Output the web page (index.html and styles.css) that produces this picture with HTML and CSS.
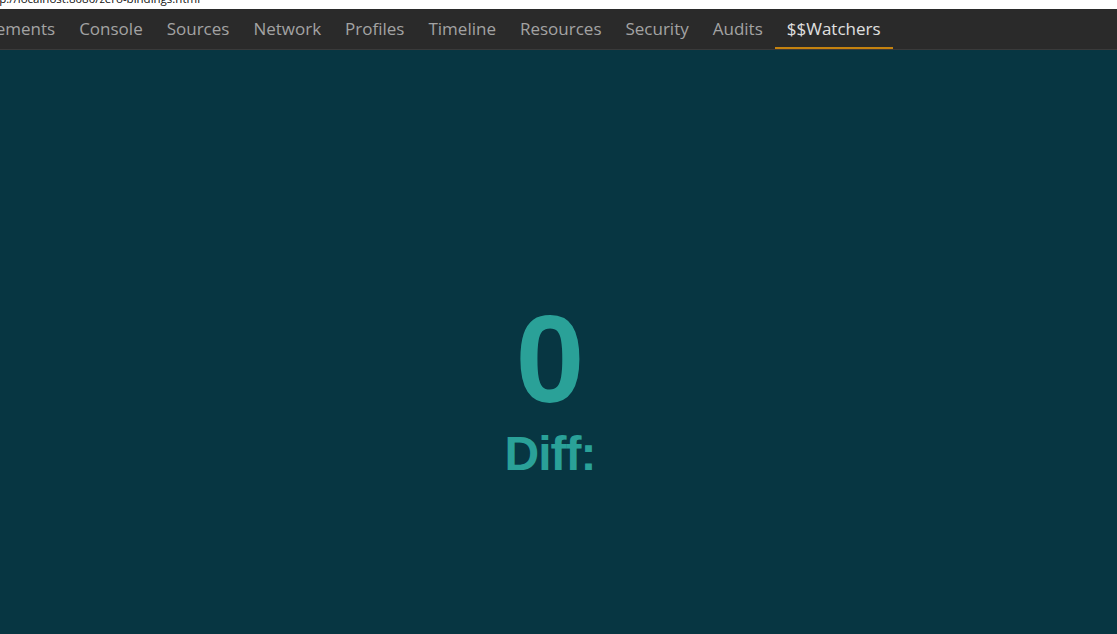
FILE: index.html
```html
<!DOCTYPE html>
<html>
<head>
<meta charset="utf-8">
<link rel="stylesheet" href="styles.css">
</head>
<body>
<div class="urlbar"><span class="url">http://localhost:8080/zero-bindings.html</span></div>
<nav class="tabbar">
  <div class="tabs">
    <div class="tab">Elements</div>
    <div class="tab">Console</div>
    <div class="tab">Sources</div>
    <div class="tab">Network</div>
    <div class="tab">Profiles</div>
    <div class="tab">Timeline</div>
    <div class="tab">Resources</div>
    <div class="tab">Security</div>
    <div class="tab">Audits</div>
    <div class="tab active">$$Watchers</div>
  </div>
</nav>
<main class="panel">
  <div class="stats">
    <div class="count">0</div>
    <div class="label">Diff:</div>
  </div>
</main>
</body>
</html>
```
FILE: styles.css
```css
html, body {
  margin: 0;
  padding: 0;
  height: 100%;
  overflow: hidden;
}
body {
  display: flex;
  flex-direction: column;
  background: #073642;
}
.urlbar {
  height: 9px;
  background: #ffffff;
  overflow: hidden;
  flex: none;
}
.url {
  display: block;
  font-family: "Open Sans", "Noto Sans", sans-serif;
  font-size: 11.5px;
  line-height: 12px;
  margin-top: -7px;
  margin-left: -16px;
  color: #111;
  white-space: nowrap;
}
.tabbar {
  height: 40px;
  background: #2a2a2a;
  border-bottom: 1px solid #3a3a3a;
  overflow: hidden;
  flex: none;
}
.tabs {
  display: flex;
  height: 100%;
  margin-left: -30px;
}
.tab {
  font-family: "Open Sans", "Noto Sans", sans-serif;
  font-size: 17px;
  color: #a3a3a3;
  padding: 0 12px;
  line-height: 40px;
  height: 40px;
  box-sizing: border-box;
  white-space: nowrap;
}
.tab.active {
  color: #e0e0e0;
  border-bottom: 2px solid #c5820f;
}
.panel {
  flex: 1;
  display: flex;
  align-items: center;
  justify-content: center;
  padding-right: 17px;
}
.stats {
  text-align: center;
  font-family: "Liberation Sans", Arial, sans-serif;
  font-weight: bold;
  color: #2aa198;
  margin-top: 84px;
}
.count {
  font-size: 124px;
  line-height: 140px;
}
.label {
  font-size: 48px;
  letter-spacing: -1px;
  line-height: 50px;
}
```
